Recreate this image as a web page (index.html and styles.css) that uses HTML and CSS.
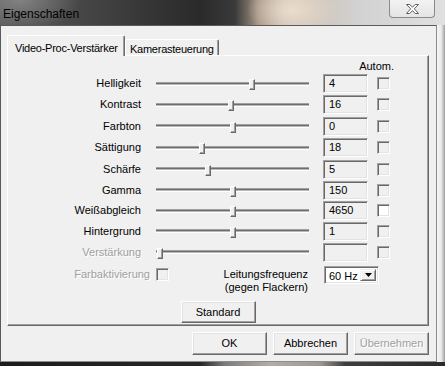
FILE: index.html
```html
<!DOCTYPE html>
<html lang="de">
<head>
<meta charset="utf-8">
<title>Eigenschaften</title>
<link rel="stylesheet" href="styles.css">
</head>
<body>
<div class="screen">
  <div class="titlebar">
    <span class="title">Eigenschaften</span>
    <div class="close">
      <svg width="13" height="10" viewBox="0 0 13 10"><polygon points="0.5,0.5 3.8,0.5 6.5,3.2 9.2,0.5 12.5,0.5 8.3,4.8 12.5,9.5 9.2,9.5 6.5,6.6 3.8,9.5 0.5,9.5 4.7,4.8" fill="#fff" stroke="#5e5e5e" stroke-width="1" stroke-linejoin="round"/></svg>
    </div>
  </div>
  <div class="body-row">
    <div class="client">
      <div class="tabs">
        <div class="tab active">Video-Proc-Verstärker</div>
        <div class="tab">Kamerasteuerung</div>
      </div>
      <div class="panel">
        <div class="grid">
          <div class="autom">Autom.</div>

          <div class="label">Helligkeit</div>
          <div class="slider"><div class="track"></div><div class="thumb" style="left:93px"></div></div>
          <div class="edit">4</div>
          <div class="chk"></div>

          <div class="label">Kontrast</div>
          <div class="slider"><div class="track"></div><div class="thumb" style="left:72px"></div></div>
          <div class="edit">16</div>
          <div class="chk"></div>

          <div class="label">Farbton</div>
          <div class="slider"><div class="track"></div><div class="thumb" style="left:74px"></div></div>
          <div class="edit">0</div>
          <div class="chk"></div>

          <div class="label">Sättigung</div>
          <div class="slider"><div class="track"></div><div class="thumb" style="left:43px"></div></div>
          <div class="edit">18</div>
          <div class="chk"></div>

          <div class="label">Schärfe</div>
          <div class="slider"><div class="track"></div><div class="thumb" style="left:49px"></div></div>
          <div class="edit">5</div>
          <div class="chk"></div>

          <div class="label">Gamma</div>
          <div class="slider"><div class="track"></div><div class="thumb" style="left:74px"></div></div>
          <div class="edit">150</div>
          <div class="chk"></div>

          <div class="label">Weißabgleich</div>
          <div class="slider"><div class="track"></div><div class="thumb" style="left:74px"></div></div>
          <div class="edit">4650</div>
          <div class="chk white"></div>

          <div class="label">Hintergrund</div>
          <div class="slider"><div class="track"></div><div class="thumb" style="left:74px"></div></div>
          <div class="edit">1</div>
          <div class="chk"></div>

          <div class="label disabled">Verstärkung</div>
          <div class="slider"><div class="track"></div><div class="thumb" style="left:1px"></div></div>
          <div class="edit"></div>
          <div class="chk"></div>
        </div>

        <div class="farb">
          <div class="label disabled farb-label">Farbaktivierung</div>
          <div class="farb-mid">
            <div class="chk farb-chk"></div>
            <div class="freq">Leitungsfrequenz<br>(gegen Flackern)</div>
          </div>
          <div class="combo">
            <span class="combo-text">60 Hz</span>
            <span class="combo-btn"><svg width="7" height="4" viewBox="0 0 7 4"><polygon points="0,0 7,0 3.5,4" fill="#000"/></svg></span>
          </div>
        </div>

        <div class="std-row"><div class="btn">Standard</div></div>
      </div>
      <div class="actions">
        <div class="btn">OK</div>
        <div class="btn">Abbrechen</div>
        <div class="btn disabled">Übernehmen</div>
      </div>
    </div>
    <div class="rframe"></div>
  </div>
  <div class="bottomstrip"></div>
</div>
</body>
</html>
```
FILE: styles.css
```css
html, body {
  margin: 0;
  padding: 0;
  background: #1e1e1e;
}

.screen {
  width: 445px;
  height: 366px;
  overflow: hidden;
  display: flex;
  flex-direction: column;
  font-family: "Liberation Sans", Arial, sans-serif;
  font-size: 11px;
  color: #000;
}

.titlebar {
  height: 25px;
  flex: none;
  display: flex;
  align-items: flex-start;
  background:
    radial-gradient(ellipse 45px 28px at 292px 10px, rgba(236,222,206,0.95), rgba(236,222,206,0) 100%),
    radial-gradient(ellipse 60px 30px at 20px 0px, rgba(140,140,140,0.8), rgba(140,140,140,0) 100%),
    linear-gradient(90deg, #5c5c5c 0px, #4c4c4c 60px, #3a3a3a 130px, #2a2a2a 200px, #3a3a3a 235px, #a39382 258px, #cdbfb1 285px, #cfc7be 320px, #d2d2d2 360px, #e0e0e0 445px);
}

.title {
  font-size: 12px;
  line-height: 14px;
  margin: 7px 0 0 3px;
  color: #000;
}

.close {
  margin-left: auto;
  margin-right: 10px;
  width: 46px;
  height: 18px;
  box-sizing: border-box;
  border: 1px solid #8a8a8a;
  border-top: none;
  border-radius: 0 0 4px 4px;
  background: linear-gradient(#f2f2f2, #e4e4e4);
  display: flex;
  align-items: center;
  justify-content: center;
  padding-top: 1px;
}

.body-row {
  height: 337px;
  flex: none;
  display: flex;
}

.client {
  width: 437px;
  flex: none;
  box-sizing: border-box;
  border: 1px solid;
  border-color: #5a5a5a #8c8c8c #8c8c8c #5a5a5a;
  background: #f0f0f0;
  padding: 0 7px 0 6px;
}

.rframe {
  flex: 1;
  background: linear-gradient(90deg, #f4f4f4 0px, #ececec 4px, #c8c8c8 6px, #9c9c9c 8px);
}

.bottomstrip {
  flex: 1;
  background: linear-gradient(90deg, #1c1c1c 0px, #262626 200px, #7c7c7c 225px, #b4aca4 270px, #a09890 320px, #3e3e3e 345px, #2a2a2a 445px);
}

/* Tabs */
.tabs {
  display: flex;
  align-items: flex-end;
  margin-top: 9px;
  height: 20px;
}

.tab {
  box-sizing: border-box;
  height: 16px;
  border: 1px solid;
  border-color: #fff #696969 transparent #fff;
  border-bottom: none;
  border-radius: 2px 2px 0 0;
  box-shadow: inset -1px 0 #a0a0a0;
  padding: 2px 3px 0 4px;
  line-height: 14px;
  white-space: nowrap;
  letter-spacing: -0.25px;
}

.tab.active {
  position: relative;
  z-index: 1;
  height: 21px;
  margin-bottom: -1px;
  background: #f0f0f0;
  padding: 5px 4px 0 7px;
  width: 118px;
}

.tab:not(.active) {
  width: 94px;
}

/* Panel */
.panel {
  box-sizing: border-box;
  height: 271px;
  border: 1px solid;
  border-color: #fff #696969 #696969 #fff;
  box-shadow: inset -1px -1px #a0a0a0;
  display: flex;
  flex-direction: column;
}

.grid {
  display: grid;
  grid-template-columns: 133px 168px 59px 22px;
  grid-template-rows: 17px 21px 21px 22px 21px 22px 20px 21px 20px 22px;
  align-items: center;
}

.autom {
  grid-column: 3 / 5;
  justify-self: end;
  align-self: end;
  margin-right: -4px;
  line-height: 13px;
}

.label {
  justify-self: end;
  line-height: 13px;
  white-space: nowrap;
}

.disabled {
  color: #a0a0a0;
  text-shadow: 1px 1px 0 #fff;
}

.slider {
  position: relative;
  justify-self: end;
  width: 153px;
  height: 19px;
  display: flex;
  align-items: center;
}

.track {
  width: 100%;
  height: 2px;
  border-top: 1px solid #a0a0a0;
  border-bottom: 1px solid #fff;
  background: linear-gradient(#6e6e6e 50%, #b8b8b8 50%);
}

.thumb {
  position: absolute;
  top: 5px;
  width: 6px;
  height: 11px;
  box-sizing: border-box;
  border: 1px solid;
  border-color: #fff #696969 #696969 #fff;
  box-shadow: inset -1px -1px #a0a0a0;
  background: #f0f0f0;
}

.edit {
  justify-self: end;
  box-sizing: border-box;
  width: 45px;
  height: 19px;
  border: 1px solid;
  border-color: #a0a0a0 #fff #fff #a0a0a0;
  box-shadow: inset 1px 1px #696969, inset -1px -1px #e3e3e3;
  background: #f0f0f0;
  padding-left: 5px;
  line-height: 17px;
}

.chk {
  justify-self: end;
  box-sizing: border-box;
  width: 13px;
  height: 13px;
  border: 1px solid;
  border-color: #a0a0a0 #fff #fff #a0a0a0;
  box-shadow: inset 1px 1px #696969, inset -1px -1px #e3e3e3;
  background: #f0f0f0;
}

.chk.white {
  background: #fff;
}

/* Farbaktivierung row */
.farb {
  display: grid;
  grid-template-columns: 133px 168px 81px;
  margin-top: 3px;
  height: 29px;
  align-items: start;
}

.farb-label {
  margin-top: 2px;
  margin-right: -9px;
}

.farb-mid {
  display: flex;
  justify-content: space-between;
  align-items: flex-start;
  padding-left: 15px;
  padding-right: 1px;
}

.farb-chk {
  margin-top: 2px;
}

.freq {
  text-align: right;
  line-height: 13px;
  margin-top: 2px;
}

.combo {
  margin-left: 15px;
  box-sizing: border-box;
  width: 55px;
  height: 18px;
  border: 1px solid;
  border-color: #a0a0a0 #fff #fff #a0a0a0;
  box-shadow: inset 1px 1px #696969, inset -1px -1px #e3e3e3;
  background: #fff;
  display: flex;
  align-items: stretch;
  padding: 2px;
}

.combo-text {
  flex: 1;
  line-height: 14px;
  padding-left: 2px;
}

.combo-btn {
  box-sizing: border-box;
  width: 16px;
  border: 1px solid;
  border-color: #f0f0f0 #696969 #696969 #f0f0f0;
  box-shadow: inset 1px 1px #fff, inset -1px -1px #a0a0a0;
  background: #f0f0f0;
  display: flex;
  align-items: center;
  justify-content: center;
}

/* Buttons */
.std-row {
  display: flex;
  justify-content: center;
  margin-top: 6px;
}

.btn {
  box-sizing: border-box;
  width: 75px;
  height: 23px;
  border: 1px solid;
  border-color: #fff #696969 #696969 #fff;
  box-shadow: inset -1px -1px #a0a0a0, inset 1px 1px #e3e3e3;
  background: #f0f0f0;
  display: flex;
  align-items: center;
  justify-content: center;
  line-height: 13px;
}

.std-row .btn {
  height: 22px;
}

.actions {
  display: flex;
  justify-content: flex-end;
  gap: 6px;
  margin-top: 6px;
}
```
